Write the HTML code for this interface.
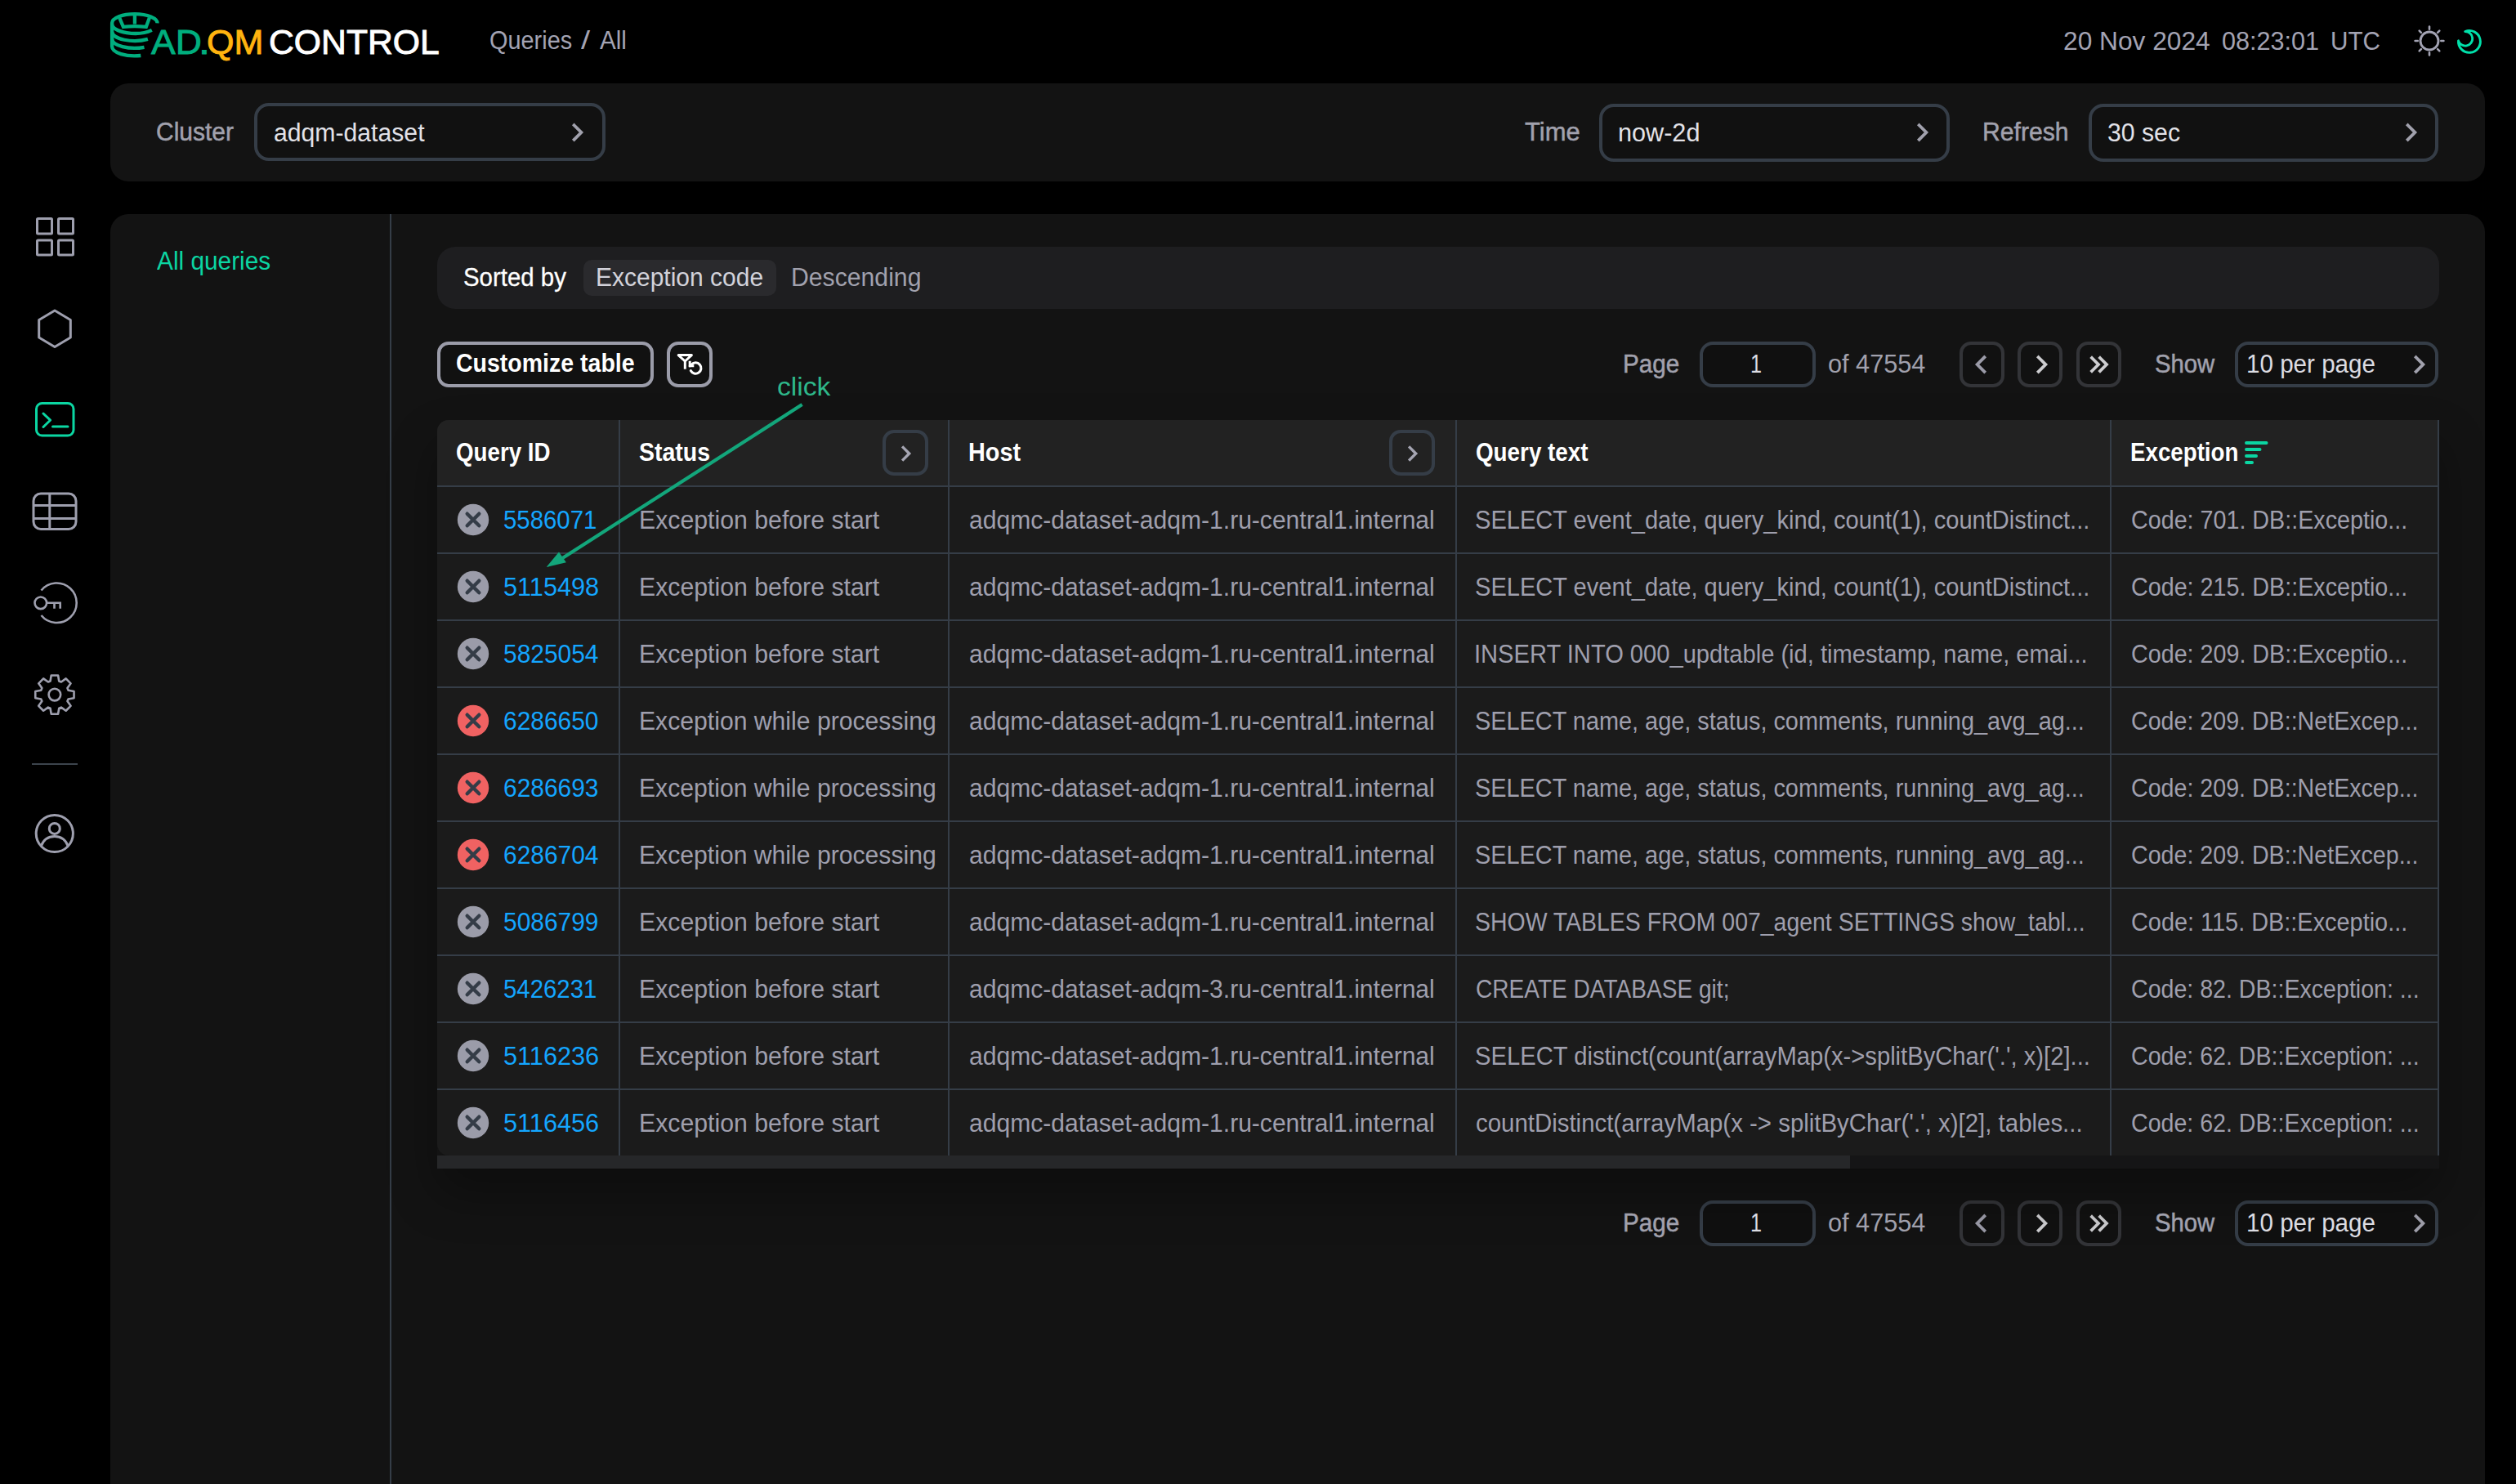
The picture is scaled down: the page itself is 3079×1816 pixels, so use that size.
<!DOCTYPE html>
<html><head><meta charset="utf-8"><title>ADQM Control - Queries</title>
<style>
html,body{margin:0;padding:0;}
body{width:3079px;height:1816px;background:#000;overflow:hidden;position:relative;font-family:"Liberation Sans",sans-serif;}
.t{position:absolute;white-space:pre;transform-origin:0 0;}
</style></head><body>
<div style="position:absolute;left:135px;top:102px;width:2906px;height:120px;background:#131313;border-radius:22px;"></div>
<div style="position:absolute;left:135px;top:262px;width:2906px;height:1574px;background:#131313;border-radius:22px 22px 0 0;"></div>
<div style="position:absolute;left:477px;top:262px;width:2px;height:1554px;background:#353d47;"></div>
<svg style="position:absolute;left:130px;top:10px" width="70" height="66" viewBox="0 0 70 66">
<g fill="none" stroke="#00ae7e" stroke-width="4.3" stroke-linecap="butt">
<path d="M62.5 18.4 A27.7 11.2 0 0 0 7.1 18.1 L7.1 47.1 A27.7 11.3 0 0 0 42.3 58"/>
<path d="M7.1 19.5 A27.7 11.3 0 0 0 55.8 26.9"/>
<path d="M7.1 28.7 A27.7 11.3 0 0 0 50.9 37.9"/>
<path d="M7.1 37.6 A27.7 11.3 0 0 0 46.5 47.8"/>
<path d="M16.3 12 L20.9 22.9 A45 14 0 0 1 48.8 22.9 L52.9 11.8"/>
<path d="M34.9 8 V19.5"/>
</g></svg>
<svg style="position:absolute;left:2948px;top:25px" width="50" height="50" viewBox="-25 -25 50 50">
<g stroke="#a3a3b3" stroke-width="2.9" fill="none" stroke-linecap="round">
<circle r="11"/>
<path d="M0 -14.3 V-17.4 M0 14.3 V17.4 M-14.3 0 H-17.4 M14.3 0 H17.4 M10.1 -10.1 L12.3 -12.3 M-10.1 -10.1 L-12.3 -12.3 M10.1 10.1 L12.3 12.3 M-10.1 10.1 L-12.3 12.3" stroke-width="2.6"/>
</g></svg>
<svg style="position:absolute;left:3000px;top:30px" width="45" height="42" viewBox="0 0 45 42">
<path d="M8.5 19.8 A13.45 13.45 0 1 0 16.7 8.5 A8.8 8.8 0 1 1 8.5 19.8 Z" fill="none" stroke="#00e0aa" stroke-width="2.9" stroke-linejoin="round"/>
</svg>
<div style="position:absolute;left:311px;top:126.3px;width:429.79999999999995px;height:71.2px;box-sizing:border-box;border:4px solid #353d47;border-radius:18px;background:#111111;"></div>
<svg style="position:absolute;left:686.5px;top:141.9px" width="40" height="40" viewBox="-20 -20 40 40"><path d="M-4.35 -8.7 L4.35 0 L-4.35 8.7" fill="none" stroke="#a1a1ad" stroke-width="3.8" stroke-linecap="square" stroke-linejoin="miter"/></svg>
<div style="position:absolute;left:1957px;top:126.5px;width:429px;height:71.0px;box-sizing:border-box;border:4px solid #353d47;border-radius:18px;background:#111111;"></div>
<svg style="position:absolute;left:2333px;top:142.0px" width="40" height="40" viewBox="-20 -20 40 40"><path d="M-4.35 -8.7 L4.35 0 L-4.35 8.7" fill="none" stroke="#a1a1ad" stroke-width="3.8" stroke-linecap="square" stroke-linejoin="miter"/></svg>
<div style="position:absolute;left:2556px;top:126.5px;width:428px;height:71.0px;box-sizing:border-box;border:4px solid #353d47;border-radius:18px;background:#111111;"></div>
<svg style="position:absolute;left:2930.5px;top:142.0px" width="40" height="40" viewBox="-20 -20 40 40"><path d="M-4.35 -8.7 L4.35 0 L-4.35 8.7" fill="none" stroke="#a1a1ad" stroke-width="3.8" stroke-linecap="square" stroke-linejoin="miter"/></svg>
<svg style="position:absolute;left:0;top:250px" width="135" height="820" viewBox="0 250 135 820">
<g fill="none" stroke="#9e9fae" stroke-width="3">
<rect x="45.5" y="267.5" width="18" height="18.5" rx="1"/>
<rect x="71.5" y="267.5" width="18" height="18.5" rx="1"/>
<rect x="45.5" y="294" width="18" height="18" rx="1"/>
<rect x="71.5" y="294" width="18" height="18" rx="1"/>
<path d="M67 380 L86.3 391.5 L86.3 413 L67 424.5 L47.7 413 L47.7 391.5 Z" stroke-linejoin="round"/>
<rect x="41" y="604" width="52" height="43.5" rx="9"/>
<path d="M41 618.5 H93 M41 634.5 H93 M60.8 604 V647.5"/>
<g stroke-width="2.6"><path d="M50.5 722.5 A24.3 24.3 0 1 1 50.5 753"/>
<circle cx="49.8" cy="737.8" r="7.3"/>
<path d="M57 737.8 H75 M66.5 737.8 V744.8 M73.7 737.8 V744.8"/></g>
<circle cx="66.9" cy="850.1" r="7.3" stroke-width="2.6"/>
<path d="M61.56 833.43 L62.72 826.47 L71.08 826.47 L72.24 833.43 L74.91 834.54 L80.66 830.43 L86.57 836.34 L82.46 842.09 L83.57 844.76 L90.53 845.92 L90.53 854.28 L83.57 855.44 L82.46 858.11 L86.57 863.86 L80.66 869.77 L74.91 865.66 L72.24 866.77 L71.08 873.73 L62.72 873.73 L61.56 866.77 L58.89 865.66 L53.14 869.77 L47.23 863.86 L51.34 858.11 L50.23 855.44 L43.27 854.28 L43.27 845.92 L50.23 844.76 L51.34 842.09 L47.23 836.34 L53.14 830.43 L58.89 834.54 Z" stroke-linejoin="round" stroke-width="2.6"/>
<circle cx="66.8" cy="1020" r="22.6"/>
<circle cx="66.8" cy="1013.9" r="6.5"/>
<path d="M50.3 1035.5 C53.5 1027 60 1023.6 66.8 1023.6 C73.6 1023.6 80 1027 83.3 1035.5"/>
</g>
<g fill="none" stroke="#0bd6a2" stroke-width="3">
<rect x="44.5" y="493.5" width="45.5" height="39.5" rx="7"/>
<path d="M53 506 L61.5 514.2 L53 522.5" stroke-linecap="round" stroke-linejoin="round"/>
<path d="M64.5 522 H83" stroke-linecap="round"/>
</g>
<path d="M39 935 H95" stroke="#3c444d" stroke-width="2"/>
</svg>
<div style="position:absolute;left:535px;top:302px;width:2450px;height:76px;background:#1e1e20;border-radius:22px;"></div>
<div style="position:absolute;left:714px;top:318px;width:236px;height:44px;background:#2a2a2d;border-radius:10px;"></div>
<div style="position:absolute;left:535px;top:418px;width:265px;height:56px;box-sizing:border-box;border:4px solid #9b9ca9;border-radius:14px;background:#111111;"></div>
<div style="position:absolute;left:816px;top:418px;width:56px;height:56px;box-sizing:border-box;border:4px solid #9b9ca9;border-radius:14px;background:#111111;"></div>
<svg style="position:absolute;left:816px;top:418px" width="56" height="56" viewBox="0 0 56 56">
<g fill="none" stroke="#ffffff" stroke-width="3">
<path d="M14.2 16.6 H30.4 L22.3 24 Z" stroke-linejoin="round"/>
<path d="M22.3 24 V33.7"/>
<path d="M29.3 35.5 A6.7 6.7 0 1 0 30.4 27.9 L28.2 29.8" stroke-linecap="round"/>
<path d="M28.2 23.7 V29.7 H33.3"/>
</g></svg>
<div style="position:absolute;left:2080px;top:418px;width:142px;height:56px;box-sizing:border-box;border:4px solid #353d47;border-radius:16px;background:#101010;"></div>
<div style="position:absolute;left:2398px;top:418px;width:55px;height:56px;box-sizing:border-box;border:4px solid #333438;border-radius:14px;background:#111111;"></div>
<div style="position:absolute;left:2469px;top:418px;width:55px;height:56px;box-sizing:border-box;border:4px solid #333438;border-radius:14px;background:#111111;"></div>
<div style="position:absolute;left:2541px;top:418px;width:55px;height:56px;box-sizing:border-box;border:4px solid #333438;border-radius:14px;background:#111111;"></div>
<svg style="position:absolute;left:2403.6px;top:426px" width="40" height="40" viewBox="-20 -20 40 40"><path d="M4.35 -8.7 L-4.35 0 L4.35 8.7" fill="none" stroke="#9b9ba8" stroke-width="3.8" stroke-linecap="square" stroke-linejoin="miter"/></svg>
<svg style="position:absolute;left:2478.5px;top:426px" width="40" height="40" viewBox="-20 -20 40 40"><path d="M-4.35 -8.7 L4.35 0 L-4.35 8.7" fill="none" stroke="#cdcdd0" stroke-width="3.8" stroke-linecap="square" stroke-linejoin="miter"/></svg>
<svg style="position:absolute;left:2548.8px;top:426px" width="40" height="40" viewBox="-20 -20 40 40"><path d="M-9.0 -8 L-1.0 0 L-9.0 8 M1.0 -8 L9.0 0 L1.0 8" fill="none" stroke="#cdcdd0" stroke-width="3.8" stroke-linecap="square" stroke-linejoin="miter"/></svg>
<div style="position:absolute;left:2735px;top:418px;width:249px;height:56px;box-sizing:border-box;border:4px solid #353d47;border-radius:16px;background:#101010;"></div>
<svg style="position:absolute;left:2941px;top:426px" width="40" height="40" viewBox="-20 -20 40 40"><path d="M-4.35 -8.7 L4.35 0 L-4.35 8.7" fill="none" stroke="#a1a1ad" stroke-width="3.8" stroke-linecap="square" stroke-linejoin="miter"/></svg>
<div style="position:absolute;left:2080px;top:1469px;width:142px;height:56px;box-sizing:border-box;border:4px solid #353d47;border-radius:16px;background:#101010;"></div>
<div style="position:absolute;left:2398px;top:1469px;width:55px;height:56px;box-sizing:border-box;border:4px solid #333438;border-radius:14px;background:#111111;"></div>
<div style="position:absolute;left:2469px;top:1469px;width:55px;height:56px;box-sizing:border-box;border:4px solid #333438;border-radius:14px;background:#111111;"></div>
<div style="position:absolute;left:2541px;top:1469px;width:55px;height:56px;box-sizing:border-box;border:4px solid #333438;border-radius:14px;background:#111111;"></div>
<svg style="position:absolute;left:2403.6px;top:1477px" width="40" height="40" viewBox="-20 -20 40 40"><path d="M4.35 -8.7 L-4.35 0 L4.35 8.7" fill="none" stroke="#9b9ba8" stroke-width="3.8" stroke-linecap="square" stroke-linejoin="miter"/></svg>
<svg style="position:absolute;left:2478.5px;top:1477px" width="40" height="40" viewBox="-20 -20 40 40"><path d="M-4.35 -8.7 L4.35 0 L-4.35 8.7" fill="none" stroke="#cdcdd0" stroke-width="3.8" stroke-linecap="square" stroke-linejoin="miter"/></svg>
<svg style="position:absolute;left:2548.8px;top:1477px" width="40" height="40" viewBox="-20 -20 40 40"><path d="M-9.0 -8 L-1.0 0 L-9.0 8 M1.0 -8 L9.0 0 L1.0 8" fill="none" stroke="#cdcdd0" stroke-width="3.8" stroke-linecap="square" stroke-linejoin="miter"/></svg>
<div style="position:absolute;left:2735px;top:1469px;width:249px;height:56px;box-sizing:border-box;border:4px solid #353d47;border-radius:16px;background:#101010;"></div>
<svg style="position:absolute;left:2941px;top:1477px" width="40" height="40" viewBox="-20 -20 40 40"><path d="M-4.35 -8.7 L4.35 0 L-4.35 8.7" fill="none" stroke="#a1a1ad" stroke-width="3.8" stroke-linecap="square" stroke-linejoin="miter"/></svg>
<div style="position:absolute;left:535px;top:513.5px;width:2450px;height:916.5px;box-shadow:0 30px 60px rgba(0,0,0,0.32);border-radius:14px 0 0 0;"></div>
<div style="position:absolute;left:535px;top:513.5px;width:2450px;height:900.0px;background:#1b1b1b;border-radius:14px 0 0 14px;overflow:hidden;"></div>
<div style="position:absolute;left:535px;top:513.5px;width:2450px;height:81.0px;background:#222222;border-radius:14px 0 0 0;"></div>
<div style="position:absolute;left:535px;top:594px;width:2450px;height:2px;background:#353d47;"></div>
<div style="position:absolute;left:535px;top:676px;width:2450px;height:2px;background:#353d47;"></div>
<div style="position:absolute;left:535px;top:758px;width:2450px;height:2px;background:#353d47;"></div>
<div style="position:absolute;left:535px;top:840px;width:2450px;height:2px;background:#353d47;"></div>
<div style="position:absolute;left:535px;top:922px;width:2450px;height:2px;background:#353d47;"></div>
<div style="position:absolute;left:535px;top:1004px;width:2450px;height:2px;background:#353d47;"></div>
<div style="position:absolute;left:535px;top:1086px;width:2450px;height:2px;background:#353d47;"></div>
<div style="position:absolute;left:535px;top:1168px;width:2450px;height:2px;background:#353d47;"></div>
<div style="position:absolute;left:535px;top:1250px;width:2450px;height:2px;background:#353d47;"></div>
<div style="position:absolute;left:535px;top:1332px;width:2450px;height:2px;background:#353d47;"></div>
<div style="position:absolute;left:757px;top:513.5px;width:2px;height:900.0px;background:#353d47;"></div>
<div style="position:absolute;left:1160px;top:513.5px;width:2px;height:900.0px;background:#353d47;"></div>
<div style="position:absolute;left:1780.5px;top:513.5px;width:2.0px;height:900.0px;background:#353d47;"></div>
<div style="position:absolute;left:2582px;top:513.5px;width:2px;height:900.0px;background:#353d47;"></div>
<div style="position:absolute;left:2983px;top:513.5px;width:2px;height:900.0px;background:#353d47;"></div>
<div style="position:absolute;left:535px;top:1413.8px;width:2450px;height:16.200000000000045px;background:#151516;"></div>
<div style="position:absolute;left:535px;top:1413.8px;width:1729px;height:16.200000000000045px;background:#262729;"></div>
<div style="position:absolute;left:1080px;top:526px;width:56px;height:56px;box-sizing:border-box;border:4px solid #353d47;border-radius:14px;"></div>
<svg style="position:absolute;left:1089px;top:535px" width="40" height="40" viewBox="-20 -20 40 40"><path d="M-3.7 -7.4 L3.7 0 L-3.7 7.4" fill="none" stroke="#a5a5b2" stroke-width="3.4" stroke-linecap="square" stroke-linejoin="miter"/></svg>
<div style="position:absolute;left:1700px;top:526px;width:56px;height:56px;box-sizing:border-box;border:4px solid #353d47;border-radius:14px;"></div>
<svg style="position:absolute;left:1709px;top:535px" width="40" height="40" viewBox="-20 -20 40 40"><path d="M-3.7 -7.4 L3.7 0 L-3.7 7.4" fill="none" stroke="#a5a5b2" stroke-width="3.4" stroke-linecap="square" stroke-linejoin="miter"/></svg>
<svg style="position:absolute;left:2745px;top:538px" width="32" height="32" viewBox="0 0 32 32">
<g stroke="#0bd6a2" stroke-width="4" stroke-linecap="round">
<path d="M4 4 H28.5 M4 12 H20.5 M4 20 H16 M4 28 H11"/>
</g></svg>
<svg style="position:absolute;left:559px;top:616px" width="40" height="40" viewBox="0 0 40 40">
<circle cx="20" cy="20" r="19.2" fill="#9b9ca9"/>
<path d="M12.7 12.7 L27.3 27.3 M27.3 12.7 L12.7 27.3" stroke="#343c47" stroke-width="4.4" stroke-linecap="round"/>
</svg>
<svg style="position:absolute;left:559px;top:698px" width="40" height="40" viewBox="0 0 40 40">
<circle cx="20" cy="20" r="19.2" fill="#9b9ca9"/>
<path d="M12.7 12.7 L27.3 27.3 M27.3 12.7 L12.7 27.3" stroke="#343c47" stroke-width="4.4" stroke-linecap="round"/>
</svg>
<svg style="position:absolute;left:559px;top:780px" width="40" height="40" viewBox="0 0 40 40">
<circle cx="20" cy="20" r="19.2" fill="#9b9ca9"/>
<path d="M12.7 12.7 L27.3 27.3 M27.3 12.7 L12.7 27.3" stroke="#343c47" stroke-width="4.4" stroke-linecap="round"/>
</svg>
<svg style="position:absolute;left:559px;top:862px" width="40" height="40" viewBox="0 0 40 40">
<circle cx="20" cy="20" r="19.2" fill="#f06262"/>
<path d="M12.7 12.7 L27.3 27.3 M27.3 12.7 L12.7 27.3" stroke="#343c47" stroke-width="4.4" stroke-linecap="round"/>
</svg>
<svg style="position:absolute;left:559px;top:944px" width="40" height="40" viewBox="0 0 40 40">
<circle cx="20" cy="20" r="19.2" fill="#f06262"/>
<path d="M12.7 12.7 L27.3 27.3 M27.3 12.7 L12.7 27.3" stroke="#343c47" stroke-width="4.4" stroke-linecap="round"/>
</svg>
<svg style="position:absolute;left:559px;top:1026px" width="40" height="40" viewBox="0 0 40 40">
<circle cx="20" cy="20" r="19.2" fill="#f06262"/>
<path d="M12.7 12.7 L27.3 27.3 M27.3 12.7 L12.7 27.3" stroke="#343c47" stroke-width="4.4" stroke-linecap="round"/>
</svg>
<svg style="position:absolute;left:559px;top:1108px" width="40" height="40" viewBox="0 0 40 40">
<circle cx="20" cy="20" r="19.2" fill="#9b9ca9"/>
<path d="M12.7 12.7 L27.3 27.3 M27.3 12.7 L12.7 27.3" stroke="#343c47" stroke-width="4.4" stroke-linecap="round"/>
</svg>
<svg style="position:absolute;left:559px;top:1190px" width="40" height="40" viewBox="0 0 40 40">
<circle cx="20" cy="20" r="19.2" fill="#9b9ca9"/>
<path d="M12.7 12.7 L27.3 27.3 M27.3 12.7 L12.7 27.3" stroke="#343c47" stroke-width="4.4" stroke-linecap="round"/>
</svg>
<svg style="position:absolute;left:559px;top:1272px" width="40" height="40" viewBox="0 0 40 40">
<circle cx="20" cy="20" r="19.2" fill="#9b9ca9"/>
<path d="M12.7 12.7 L27.3 27.3 M27.3 12.7 L12.7 27.3" stroke="#343c47" stroke-width="4.4" stroke-linecap="round"/>
</svg>
<svg style="position:absolute;left:559px;top:1354px" width="40" height="40" viewBox="0 0 40 40">
<circle cx="20" cy="20" r="19.2" fill="#9b9ca9"/>
<path d="M12.7 12.7 L27.3 27.3 M27.3 12.7 L12.7 27.3" stroke="#343c47" stroke-width="4.4" stroke-linecap="round"/>
</svg>
<span class="t" style="left:185.10px;top:30.4px;font-size:43px;line-height:43px;font-weight:400;color:#00ae7e;transform:scaleX(1.0339);-webkit-text-stroke:0.9px #00ae7e;">AD</span>
<span class="t" style="left:243.30px;top:30.4px;font-size:43px;line-height:43px;font-weight:400;color:#00ae7e;transform:scaleX(1.1667);-webkit-text-stroke:0.9px #00ae7e;">.</span>
<span class="t" style="left:253.10px;top:30.4px;font-size:43px;line-height:43px;font-weight:400;color:#ffb40f;transform:scaleX(1.0015);-webkit-text-stroke:0.9px #ffb40f;">QM</span>
<span class="t" style="left:329.41px;top:30.4px;font-size:43px;line-height:43px;font-weight:400;color:#ffffff;transform:scaleX(0.9933);-webkit-text-stroke:0.9px #ffffff;">CONTROL</span>
<span class="t" style="left:599.17px;top:33.8px;font-size:31px;line-height:31px;font-weight:400;color:#a3a3b3;transform:scaleX(0.9318);">Queries</span>
<span class="t" style="left:710.90px;top:33.8px;font-size:31px;line-height:31px;font-weight:400;color:#a3a3b3;transform:scaleX(1.2889);">/</span>
<span class="t" style="left:733.90px;top:33.8px;font-size:31px;line-height:31px;font-weight:400;color:#a3a3b3;transform:scaleX(0.9545);">All</span>
<span class="t" style="left:2524.78px;top:35.2px;font-size:31px;line-height:31px;font-weight:400;color:#a3a3b3;transform:scaleX(1.0224);">20 Nov 2024</span>
<span class="t" style="left:2718.81px;top:35.2px;font-size:31px;line-height:31px;font-weight:400;color:#a3a3b3;transform:scaleX(0.9866);">08:23:01</span>
<span class="t" style="left:2851.79px;top:35.2px;font-size:31px;line-height:31px;font-weight:400;color:#a3a3b3;transform:scaleX(0.9557);">UTC</span>
<span class="t" style="left:191.43px;top:145.5px;font-size:31px;line-height:31px;font-weight:400;color:#a1a1ad;transform:scaleX(0.9670);-webkit-text-stroke:0.5px #a1a1ad;">Cluster</span>
<span class="t" style="left:335.03px;top:146.9px;font-size:31px;line-height:31px;font-weight:400;color:#e2e2e8;transform:scaleX(0.9735);">adqm-dataset</span>
<span class="t" style="left:1865.80px;top:145.5px;font-size:31px;line-height:31px;font-weight:400;color:#a1a1ad;transform:scaleX(0.9985);-webkit-text-stroke:0.5px #a1a1ad;">Time</span>
<span class="t" style="left:1979.82px;top:147.0px;font-size:31px;line-height:31px;font-weight:400;color:#e2e2e8;transform:scaleX(0.9878);">now-2d</span>
<span class="t" style="left:2426.36px;top:145.5px;font-size:31px;line-height:31px;font-weight:400;color:#a1a1ad;transform:scaleX(0.9724);-webkit-text-stroke:0.5px #a1a1ad;">Refresh</span>
<span class="t" style="left:2578.53px;top:147.0px;font-size:31px;line-height:31px;font-weight:400;color:#e2e2e8;transform:scaleX(0.9744);">30 sec</span>
<span class="t" style="left:192.20px;top:304.0px;font-size:31px;line-height:31px;font-weight:400;color:#0bd6a2;transform:scaleX(0.9618);">All queries</span>
<span class="t" style="left:566.65px;top:323.8px;font-size:31px;line-height:31px;font-weight:400;color:#ffffff;transform:scaleX(0.9485);-webkit-text-stroke:0.3px #ffffff;">Sorted by</span>
<span class="t" style="left:729.07px;top:323.8px;font-size:31px;line-height:31px;font-weight:400;color:#d2d2da;transform:scaleX(0.9675);">Exception code</span>
<span class="t" style="left:968.25px;top:323.8px;font-size:31px;line-height:31px;font-weight:400;color:#a1a1ad;transform:scaleX(0.9738);">Descending</span>
<span class="t" style="left:558.38px;top:429.3px;font-size:31px;line-height:31px;font-weight:700;color:#ffffff;transform:scaleX(0.9195);">Customize table</span>
<span class="t" style="left:1986.39px;top:430.3px;font-size:31px;line-height:31px;font-weight:400;color:#a1a1ad;transform:scaleX(0.9571);-webkit-text-stroke:0.5px #a1a1ad;">Page</span>
<span class="t" style="left:2141.97px;top:430.3px;font-size:31px;line-height:31px;font-weight:400;color:#dcdce2;transform:scaleX(0.8143);">1</span>
<span class="t" style="left:2237.41px;top:430.3px;font-size:31px;line-height:31px;font-weight:400;color:#a1a1ad;transform:scaleX(0.9891);">of 47554</span>
<span class="t" style="left:2636.56px;top:430.3px;font-size:31px;line-height:31px;font-weight:400;color:#a1a1ad;transform:scaleX(0.9442);-webkit-text-stroke:0.5px #a1a1ad;">Show</span>
<span class="t" style="left:2748.99px;top:430.3px;font-size:31px;line-height:31px;font-weight:400;color:#dcdce2;transform:scaleX(0.9549);">10 per page</span>
<span class="t" style="left:1986.39px;top:1481.3px;font-size:31px;line-height:31px;font-weight:400;color:#a1a1ad;transform:scaleX(0.9571);-webkit-text-stroke:0.5px #a1a1ad;">Page</span>
<span class="t" style="left:2141.97px;top:1481.3px;font-size:31px;line-height:31px;font-weight:400;color:#dcdce2;transform:scaleX(0.8143);">1</span>
<span class="t" style="left:2237.41px;top:1481.3px;font-size:31px;line-height:31px;font-weight:400;color:#a1a1ad;transform:scaleX(0.9891);">of 47554</span>
<span class="t" style="left:2636.56px;top:1481.3px;font-size:31px;line-height:31px;font-weight:400;color:#a1a1ad;transform:scaleX(0.9442);-webkit-text-stroke:0.5px #a1a1ad;">Show</span>
<span class="t" style="left:2748.99px;top:1481.3px;font-size:31px;line-height:31px;font-weight:400;color:#dcdce2;transform:scaleX(0.9549);">10 per page</span>
<span class="t" style="left:950.92px;top:458.3px;font-size:31px;line-height:31px;font-weight:400;color:#2eb88a;transform:scaleX(1.0847);">click</span>
<span class="t" style="left:558.31px;top:538.3px;font-size:31px;line-height:31px;font-weight:700;color:#ffffff;transform:scaleX(0.8937);">Query ID</span>
<span class="t" style="left:781.78px;top:538.3px;font-size:31px;line-height:31px;font-weight:700;color:#ffffff;transform:scaleX(0.9183);">Status</span>
<span class="t" style="left:1185.14px;top:538.3px;font-size:31px;line-height:31px;font-weight:700;color:#ffffff;transform:scaleX(0.9299);">Host</span>
<span class="t" style="left:1805.80px;top:538.3px;font-size:31px;line-height:31px;font-weight:700;color:#ffffff;transform:scaleX(0.8967);">Query text</span>
<span class="t" style="left:2606.81px;top:538.3px;font-size:31px;line-height:31px;font-weight:700;color:#ffffff;transform:scaleX(0.8938);">Exception</span>
<span class="t" style="left:615.85px;top:620.8px;font-size:31px;line-height:31px;font-weight:400;color:#14a6ff;transform:scaleX(0.9471);">5586071</span>
<span class="t" style="left:781.55px;top:620.8px;font-size:31px;line-height:31px;font-weight:400;color:#9f9fad;transform:scaleX(0.9757);">Exception before start</span>
<span class="t" style="left:1186.03px;top:620.8px;font-size:31px;line-height:31px;font-weight:400;color:#9f9fad;transform:scaleX(0.9697);">adqmc-dataset-adqm-1.ru-central1.internal</span>
<span class="t" style="left:1805.12px;top:620.8px;font-size:31px;line-height:31px;font-weight:400;color:#9f9fad;transform:scaleX(0.9376);">SELECT event_date, query_kind, count(1), countDistinct...</span>
<span class="t" style="left:2607.67px;top:620.8px;font-size:31px;line-height:31px;font-weight:400;color:#9f9fad;transform:scaleX(0.9257);">Code: 701. DB::Exceptio...</span>
<span class="t" style="left:615.81px;top:702.8px;font-size:31px;line-height:31px;font-weight:400;color:#14a6ff;transform:scaleX(0.9897);">5115498</span>
<span class="t" style="left:781.55px;top:702.8px;font-size:31px;line-height:31px;font-weight:400;color:#9f9fad;transform:scaleX(0.9757);">Exception before start</span>
<span class="t" style="left:1186.03px;top:702.8px;font-size:31px;line-height:31px;font-weight:400;color:#9f9fad;transform:scaleX(0.9697);">adqmc-dataset-adqm-1.ru-central1.internal</span>
<span class="t" style="left:1805.12px;top:702.8px;font-size:31px;line-height:31px;font-weight:400;color:#9f9fad;transform:scaleX(0.9376);">SELECT event_date, query_kind, count(1), countDistinct...</span>
<span class="t" style="left:2607.67px;top:702.8px;font-size:31px;line-height:31px;font-weight:400;color:#9f9fad;transform:scaleX(0.9257);">Code: 215. DB::Exceptio...</span>
<span class="t" style="left:615.84px;top:784.8px;font-size:31px;line-height:31px;font-weight:400;color:#14a6ff;transform:scaleX(0.9647);">5825054</span>
<span class="t" style="left:781.55px;top:784.8px;font-size:31px;line-height:31px;font-weight:400;color:#9f9fad;transform:scaleX(0.9757);">Exception before start</span>
<span class="t" style="left:1186.03px;top:784.8px;font-size:31px;line-height:31px;font-weight:400;color:#9f9fad;transform:scaleX(0.9697);">adqmc-dataset-adqm-1.ru-central1.internal</span>
<span class="t" style="left:1804.18px;top:784.8px;font-size:31px;line-height:31px;font-weight:400;color:#9f9fad;transform:scaleX(0.9390);">INSERT INTO 000_updtable (id, timestamp, name, emai...</span>
<span class="t" style="left:2607.67px;top:784.8px;font-size:31px;line-height:31px;font-weight:400;color:#9f9fad;transform:scaleX(0.9257);">Code: 209. DB::Exceptio...</span>
<span class="t" style="left:615.84px;top:866.8px;font-size:31px;line-height:31px;font-weight:400;color:#14a6ff;transform:scaleX(0.9647);">6286650</span>
<span class="t" style="left:782.45px;top:866.8px;font-size:31px;line-height:31px;font-weight:400;color:#9f9fad;transform:scaleX(0.9727);">Exception while processing</span>
<span class="t" style="left:1186.03px;top:866.8px;font-size:31px;line-height:31px;font-weight:400;color:#9f9fad;transform:scaleX(0.9697);">adqmc-dataset-adqm-1.ru-central1.internal</span>
<span class="t" style="left:1805.14px;top:866.8px;font-size:31px;line-height:31px;font-weight:400;color:#9f9fad;transform:scaleX(0.9315);">SELECT name, age, status, comments, running_avg_ag...</span>
<span class="t" style="left:2607.68px;top:866.8px;font-size:31px;line-height:31px;font-weight:400;color:#9f9fad;transform:scaleX(0.9231);">Code: 209. DB::NetExcep...</span>
<span class="t" style="left:615.84px;top:948.8px;font-size:31px;line-height:31px;font-weight:400;color:#14a6ff;transform:scaleX(0.9647);">6286693</span>
<span class="t" style="left:782.45px;top:948.8px;font-size:31px;line-height:31px;font-weight:400;color:#9f9fad;transform:scaleX(0.9727);">Exception while processing</span>
<span class="t" style="left:1186.03px;top:948.8px;font-size:31px;line-height:31px;font-weight:400;color:#9f9fad;transform:scaleX(0.9697);">adqmc-dataset-adqm-1.ru-central1.internal</span>
<span class="t" style="left:1805.14px;top:948.8px;font-size:31px;line-height:31px;font-weight:400;color:#9f9fad;transform:scaleX(0.9315);">SELECT name, age, status, comments, running_avg_ag...</span>
<span class="t" style="left:2607.68px;top:948.8px;font-size:31px;line-height:31px;font-weight:400;color:#9f9fad;transform:scaleX(0.9231);">Code: 209. DB::NetExcep...</span>
<span class="t" style="left:615.84px;top:1030.8px;font-size:31px;line-height:31px;font-weight:400;color:#14a6ff;transform:scaleX(0.9647);">6286704</span>
<span class="t" style="left:782.45px;top:1030.8px;font-size:31px;line-height:31px;font-weight:400;color:#9f9fad;transform:scaleX(0.9727);">Exception while processing</span>
<span class="t" style="left:1186.03px;top:1030.8px;font-size:31px;line-height:31px;font-weight:400;color:#9f9fad;transform:scaleX(0.9697);">adqmc-dataset-adqm-1.ru-central1.internal</span>
<span class="t" style="left:1805.14px;top:1030.8px;font-size:31px;line-height:31px;font-weight:400;color:#9f9fad;transform:scaleX(0.9315);">SELECT name, age, status, comments, running_avg_ag...</span>
<span class="t" style="left:2607.68px;top:1030.8px;font-size:31px;line-height:31px;font-weight:400;color:#9f9fad;transform:scaleX(0.9231);">Code: 209. DB::NetExcep...</span>
<span class="t" style="left:615.84px;top:1112.8px;font-size:31px;line-height:31px;font-weight:400;color:#14a6ff;transform:scaleX(0.9647);">5086799</span>
<span class="t" style="left:781.55px;top:1112.8px;font-size:31px;line-height:31px;font-weight:400;color:#9f9fad;transform:scaleX(0.9757);">Exception before start</span>
<span class="t" style="left:1186.03px;top:1112.8px;font-size:31px;line-height:31px;font-weight:400;color:#9f9fad;transform:scaleX(0.9697);">adqmc-dataset-adqm-1.ru-central1.internal</span>
<span class="t" style="left:1805.17px;top:1112.8px;font-size:31px;line-height:31px;font-weight:400;color:#9f9fad;transform:scaleX(0.9174);">SHOW TABLES FROM 007_agent SETTINGS show_tabl...</span>
<span class="t" style="left:2607.67px;top:1112.8px;font-size:31px;line-height:31px;font-weight:400;color:#9f9fad;transform:scaleX(0.9317);">Code: 115. DB::Exceptio...</span>
<span class="t" style="left:615.85px;top:1194.8px;font-size:31px;line-height:31px;font-weight:400;color:#14a6ff;transform:scaleX(0.9471);">5426231</span>
<span class="t" style="left:781.55px;top:1194.8px;font-size:31px;line-height:31px;font-weight:400;color:#9f9fad;transform:scaleX(0.9757);">Exception before start</span>
<span class="t" style="left:1186.03px;top:1194.8px;font-size:31px;line-height:31px;font-weight:400;color:#9f9fad;transform:scaleX(0.9697);">adqmc-dataset-adqm-3.ru-central1.internal</span>
<span class="t" style="left:1806.09px;top:1194.8px;font-size:31px;line-height:31px;font-weight:400;color:#9f9fad;transform:scaleX(0.9056);">CREATE DATABASE git;</span>
<span class="t" style="left:2607.68px;top:1194.8px;font-size:31px;line-height:31px;font-weight:400;color:#9f9fad;transform:scaleX(0.9219);">Code: 82. DB::Exception: ...</span>
<span class="t" style="left:615.81px;top:1276.8px;font-size:31px;line-height:31px;font-weight:400;color:#14a6ff;transform:scaleX(0.9897);">5116236</span>
<span class="t" style="left:781.55px;top:1276.8px;font-size:31px;line-height:31px;font-weight:400;color:#9f9fad;transform:scaleX(0.9757);">Exception before start</span>
<span class="t" style="left:1186.03px;top:1276.8px;font-size:31px;line-height:31px;font-weight:400;color:#9f9fad;transform:scaleX(0.9697);">adqmc-dataset-adqm-1.ru-central1.internal</span>
<span class="t" style="left:1805.12px;top:1276.8px;font-size:31px;line-height:31px;font-weight:400;color:#9f9fad;transform:scaleX(0.9418);">SELECT distinct(count(arrayMap(x-&gt;splitByChar('.', x)[2]...</span>
<span class="t" style="left:2607.68px;top:1276.8px;font-size:31px;line-height:31px;font-weight:400;color:#9f9fad;transform:scaleX(0.9219);">Code: 62. DB::Exception: ...</span>
<span class="t" style="left:615.81px;top:1358.8px;font-size:31px;line-height:31px;font-weight:400;color:#14a6ff;transform:scaleX(0.9897);">5116456</span>
<span class="t" style="left:781.55px;top:1358.8px;font-size:31px;line-height:31px;font-weight:400;color:#9f9fad;transform:scaleX(0.9757);">Exception before start</span>
<span class="t" style="left:1186.03px;top:1358.8px;font-size:31px;line-height:31px;font-weight:400;color:#9f9fad;transform:scaleX(0.9697);">adqmc-dataset-adqm-1.ru-central1.internal</span>
<span class="t" style="left:1806.05px;top:1358.8px;font-size:31px;line-height:31px;font-weight:400;color:#9f9fad;transform:scaleX(0.9487);">countDistinct(arrayMap(x -&gt; splitByChar('.', x)[2], tables...</span>
<span class="t" style="left:2607.68px;top:1358.8px;font-size:31px;line-height:31px;font-weight:400;color:#9f9fad;transform:scaleX(0.9219);">Code: 62. DB::Exception: ...</span>
<svg style="position:absolute;left:0;top:0" width="3079" height="1816" viewBox="0 0 3079 1816" >
<path d="M981.6 495.1 L686 684.5" stroke="#13a67b" stroke-width="4.2"/>
<path d="M668.6 694 L684 675.4 L692.9 688.3 Z" fill="#13a67b"/>
</svg>
</body></html>
